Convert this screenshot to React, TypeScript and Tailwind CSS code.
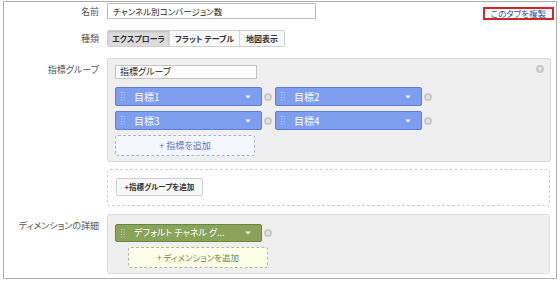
import React from 'react';

const font = { fontFamily: '"Noto Sans CJK JP", "Noto Sans", sans-serif', fontFeatureSettings: '"palt"' };

const Remove: React.FC<{ className?: string }> = ({ className = '' }) => (
  <span className={`inline-flex w-[8px] h-[8px] rounded-full bg-[#c9c9c9] items-center justify-center shrink-0 ${className}`}>
    <span className="w-[4px] h-[4px] rounded-full bg-[#e4e4e4]" />
  </span>
);

const Grip = () => (
  <svg width="4" height="9" viewBox="0 0 4 9" className="shrink-0">
    {[0, 2.5, 5, 7.5].map((y) => (
      <g key={y}>
        <rect x="0" y={y} width="1" height="1" fill="#ffffff" opacity="0.55" />
        <rect x="2.5" y={y} width="1" height="1" fill="#ffffff" opacity="0.55" />
      </g>
    ))}
  </svg>
);

const Caret = () => (
  <svg width="6" height="4" viewBox="0 0 6 4" className="shrink-0">
    <path d="M0 0.5 L6 0.5 L3 3.5 Z" fill="#ffffff" opacity="0.85" />
  </svg>
);

interface PillProps {
  label: string;
  color: 'blue' | 'green';
}

const Pill: React.FC<PillProps> = ({ label, color }) => (
  <div className="flex items-center">
    <div
      className={`w-[147px] flex items-center pl-[5px] pr-[10px] gap-[9px] rounded-[2px] border text-white ${
        color === 'blue' ? 'h-[19px] bg-[#7e9ef0] border-[#5c7ddb]' : 'h-[18px] bg-[#8aa35b] border-[#6c8740]'
      }`}
    >
      <Grip />
      <span className={`flex-1 whitespace-nowrap overflow-hidden ${color === 'blue' ? 'text-[10px]' : 'text-[9px]'}`}>{label}</span>
      <Caret />
    </div>
    <Remove className="ml-[2px]" />
  </div>
);

const Label: React.FC<{ children: React.ReactNode; className?: string }> = ({ children, className = '' }) => (
  <div className={`w-[103px] shrink-0 text-right pr-[8px] text-[9px] text-[#555] ${className}`}>{children}</div>
);

export default function App() {
  return (
    <div className="w-[560px] h-[282px] bg-white pt-[1px] pl-[3px]" style={font}>
      <div className="w-[554px] h-[278px] border border-[#adadad] bg-white flex flex-col">
        {/* name */}
        <div className="flex items-start mt-[1px]">
          <Label className="pt-[2px]">名前</Label>
          <div className="w-[209px] h-[16px] border border-[#bdbdbd] bg-white text-[8.5px] text-[#222] pl-[5px] flex items-center">
            チャンネル別コンバージョン数
          </div>
          <div className="ml-auto mr-[2px] mt-[4px] h-[13px] px-[6px] border-2 border-[#d3262a] text-[8.5px] text-[#2b4f9e] flex items-center">
            このタブを複製
          </div>
        </div>

        {/* type */}
        <div className="flex items-center mt-[10px]">
          <Label>種類</Label>
          <div className="flex h-[17px] border border-[#cfcfcf] rounded-[2px] text-[8px] font-bold text-[#333] overflow-hidden">
            <div className="w-[61px] flex items-center justify-center bg-[#dcdcdc] shadow-[inset_0_1px_2px_rgba(0,0,0,0.15)]">エクスプローラ</div>
            <div className="w-[70px] flex items-center justify-center bg-[#f9f9f9] border-l border-[#d6d6d6]">フラット テーブル</div>
            <div className="w-[45px] flex items-center justify-center bg-[#f9f9f9] border-l border-[#d6d6d6]">地図表示</div>
          </div>
        </div>

        {/* metric group */}
        <div className="flex items-start mt-[11px]">
          <Label className="pt-[5px]">指標グループ</Label>
          <div className="relative w-[444px] h-[104px] bg-[#efefef] border border-[#d9d9d9] rounded-[3px] pl-[7px] pt-[6px]">
            <Remove className="absolute right-[6px] top-[6px]" />
            <div className="w-[142px] h-[14px] bg-white border border-[#c4c4c4] text-[9px] text-[#222] pl-[4px] flex items-center">
              指標グループ
            </div>
            <div className="flex gap-[3px] mt-[8px]">
              <Pill label="目標1" color="blue" />
              <Pill label="目標2" color="blue" />
            </div>
            <div className="flex gap-[3px] mt-[5px]">
              <Pill label="目標3" color="blue" />
              <Pill label="目標4" color="blue" />
            </div>
            <div className="w-[140px] h-[21px] mt-[5px] border border-dashed border-[#a9b4cc] rounded-[3px] bg-[#f4f7ff] text-[9px] text-[#5874c9] flex items-center justify-center">
              + 指標を追加
            </div>
          </div>
        </div>

        {/* add group */}
        <div className="flex mt-[7px]">
          <div className="w-[103px] shrink-0" />
          <div className="w-[443px] h-[37px] border border-dashed border-[#cfcfcf] rounded-[3px] pl-[8px] pt-[8px]">
            <div className="w-[87px] h-[18px] bg-[#f9f9f9] border border-[#cfcfcf] rounded-[2px] text-[7.5px] font-bold text-[#333] flex items-center justify-center">
              +指標グループを追加
            </div>
          </div>
        </div>

        {/* dimension */}
        <div className="flex items-start mt-[8px]">
          <Label className="pt-[5px]">ディメンションの詳細</Label>
          <div className="w-[443px] h-[60px] bg-[#efefef] border border-[#dcdcdc] rounded-[3px] pl-[7px] pt-[9px]">
            <Pill label="デフォルト チャネル グ..." color="green" />
            <div className="ml-[13px] w-[140px] h-[21px] mt-[5px] border border-dashed border-[#b5b5a0] rounded-[3px] bg-[#fbffe8] text-[8.5px] text-[#6f8a45] flex items-center justify-center">
              + ディメンションを追加
            </div>
          </div>
        </div>
      </div>
    </div>
  );
}
